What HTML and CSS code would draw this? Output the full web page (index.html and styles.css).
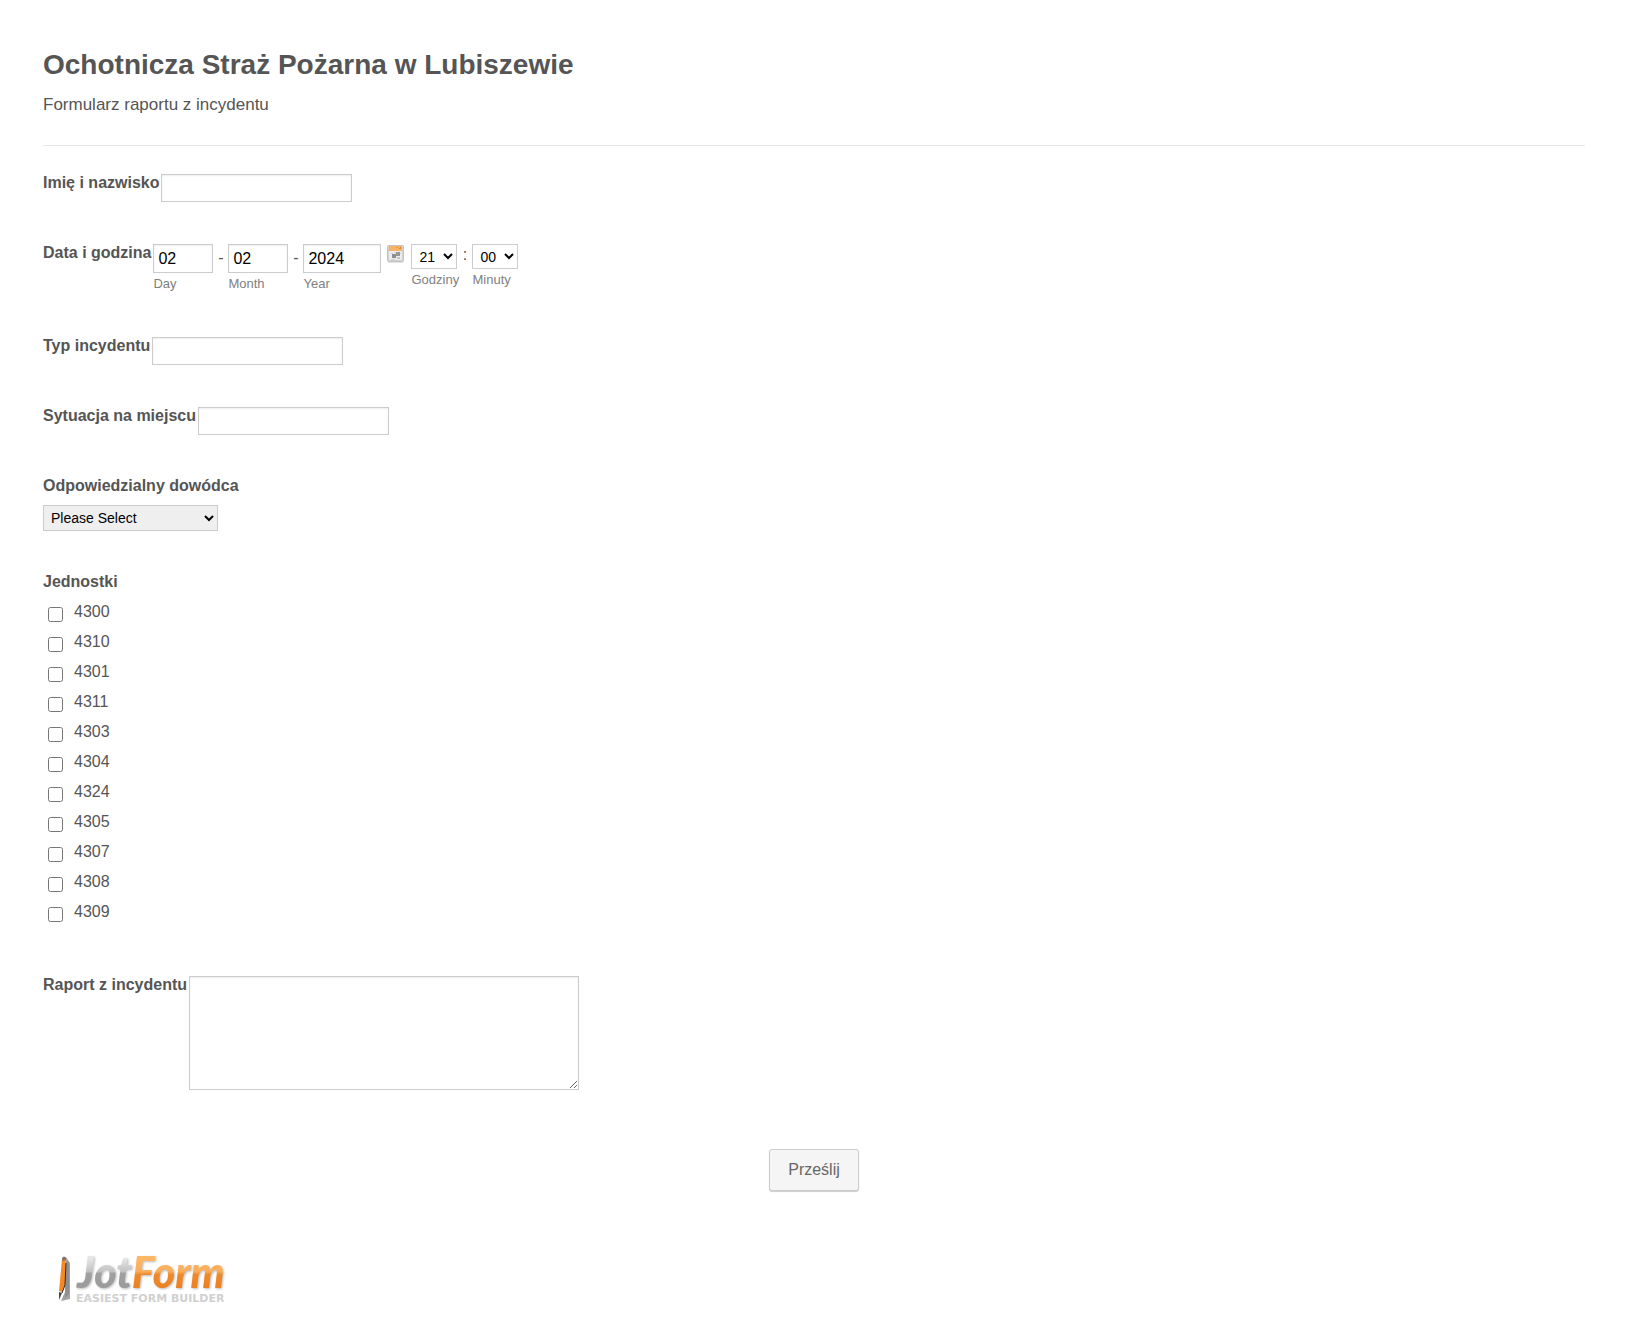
FILE: index.html
```html
<!DOCTYPE html>
<html lang="pl">
<head>
<meta charset="utf-8">
<title>Formularz raportu z incydentu</title>
<meta name="viewport" content="width=device-width, initial-scale=1">
<link rel="stylesheet" href="styles.css">
</head>
<body>
<form class="form">
  <header class="form-header">
    <h1 class="title">Ochotnicza Straż Pożarna w Lubiszewie</h1>
    <p class="subtitle">Formularz raportu z incydentu</p>
  </header>

  <div class="field">
    <label class="label" for="name">Imię i nazwisko</label>
    <input class="box" type="text" id="name">
  </div>

  <div class="field" role="group" aria-labelledby="date-label">
    <span class="label" id="date-label">Data i godzina</span>
    <div class="date">
      <div class="part"><input class="box box-date" type="text" id="day" value="02"><label class="sublabel" for="day">Day</label></div>
      <span class="sep">-</span>
      <div class="part"><input class="box box-date" type="text" id="month" value="02"><label class="sublabel" for="month">Month</label></div>
      <span class="sep">-</span>
      <div class="part"><input class="box box-date box-year" type="text" id="year" value="2024"><label class="sublabel" for="year">Year</label></div>
      <button class="calendar" type="button" aria-label="Kalendarz">
        <svg width="17" height="18" viewBox="0 0 17 18" aria-hidden="true">
          <rect x="0.5" y="0.5" width="16" height="16" rx="1" fill="#d2d2d2" stroke="#c2c2c2"/>
          <rect x="2" y="5" width="13" height="10" fill="#ececec"/>
          <rect x="2" y="1" width="13" height="5" fill="#f9b266"/>
          <path d="M9 2h2v1h2v-1h1v2h-2v-1h-2z" fill="#e98536"/>
          <path d="M4 8h2v1h-2zM7 7h2v1h-2zM12 8h2v1h-2zM4 14h4v1h-4z" fill="#d0d0d0"/>
          <rect x="9" y="7" width="4" height="4" fill="#969696"/>
          <rect x="5" y="9" width="4" height="4" fill="#8d8d8d"/>
          <rect x="10" y="12" width="3" height="2" fill="#c4c4c4"/>
          <path d="M1 17.500h15" stroke="#e4e4e4"/>
        </svg>
      </button>
      <div class="part"><select class="select select-time" id="hour"><option>21</option></select><label class="sublabel" for="hour">Godziny</label></div>
      <span class="sep sep-time">:</span>
      <div class="part"><select class="select select-time" id="minute"><option>00</option></select><label class="sublabel" for="minute">Minuty</label></div>
    </div>
  </div>

  <div class="field">
    <label class="label" for="type">Typ incydentu</label>
    <input class="box" type="text" id="type">
  </div>

  <div class="field">
    <label class="label" for="situation">Sytuacja na miejscu</label>
    <input class="box" type="text" id="situation">
  </div>

  <div class="field field-stacked">
    <label class="label" for="commander">Odpowiedzialny dowódca</label>
    <select class="select select-wide" id="commander"><option>Please Select</option></select>
  </div>

  <fieldset class="units">
    <legend class="label">Jednostki</legend>
    <label class="unit"><input class="check" type="checkbox"><span>4300</span></label>
    <label class="unit"><input class="check" type="checkbox"><span>4310</span></label>
    <label class="unit"><input class="check" type="checkbox"><span>4301</span></label>
    <label class="unit"><input class="check" type="checkbox"><span>4311</span></label>
    <label class="unit"><input class="check" type="checkbox"><span>4303</span></label>
    <label class="unit"><input class="check" type="checkbox"><span>4304</span></label>
    <label class="unit"><input class="check" type="checkbox"><span>4324</span></label>
    <label class="unit"><input class="check" type="checkbox"><span>4305</span></label>
    <label class="unit"><input class="check" type="checkbox"><span>4307</span></label>
    <label class="unit"><input class="check" type="checkbox"><span>4308</span></label>
    <label class="unit"><input class="check" type="checkbox"><span>4309</span></label>
  </fieldset>

  <div class="field">
    <label class="label" for="report">Raport z incydentu</label>
    <textarea class="box box-report" id="report"></textarea>
  </div>

  <div class="actions"><button class="submit" type="submit">Prześlij</button></div>
</form>

<footer class="footer">
  <a class="logo" href="#" aria-label="JotForm">
    <svg width="174" height="66" viewBox="0 -12 174 66" aria-hidden="true">
      <defs>
        <linearGradient id="silver" x1="0" y1="0" x2="0" y2="1">
          <stop offset="0.25" stop-color="#e6e6e6"/><stop offset="0.5" stop-color="#c2c2c2"/><stop offset="0.54" stop-color="#a0a0a0"/><stop offset="0.85" stop-color="#9a9a9a"/>
        </linearGradient>
        <linearGradient id="orange" x1="0" y1="0" x2="0" y2="1">
          <stop offset="0.2" stop-color="#fdb866"/><stop offset="0.5" stop-color="#fbad5b"/><stop offset="0.56" stop-color="#ee8a2c"/><stop offset="0.85" stop-color="#ea8122"/>
        </linearGradient>
      </defs>
      <path d="M9 2l4 6v36l-9 2 4-9z" fill="#a2a2a2"/>
      <path d="M10 5l2 4v30l-4 4z" fill="#8e8e8e"/>
      <path d="M5 4l4-2-1 28-3 7-3-1z" fill="#f58a24"/>
      <path d="M5 3q2-3 4 0v2l-4 1z" fill="#8b7460"/>
      <path d="M9 8l-1 22-3 8" fill="none" stroke="#222" stroke-width="1"/>
      <path d="M2 37l3 1-3 7z" fill="#444"/>
      <text class="wordmark" x="20" y="33"><tspan fill="url(#silver)">Jot</tspan><tspan fill="url(#orange)">Form</tspan></text>
      <text class="tagline" x="19" y="47">EASIEST FORM BUILDER</text>
    </svg>
  </a>
</footer>
</body>
</html>
```
FILE: styles.css
```css
* { box-sizing: border-box; }

body {
  margin: 0;
  padding: 45px 43px 34px;
  background: #fff;
  color: #555;
  font: 16px/18px "Liberation Sans", Arial, sans-serif;
}

.form-header {
  padding-bottom: 30px;
  margin-bottom: 28px;
  border-bottom: 1px solid #e6e6e6;
}

.title { margin: 0 0 9px; font-size: 28px; line-height: 40px; }
.subtitle { margin: 0; font-size: 17px; line-height: 21px; }

.field {
  display: flex;
  align-items: flex-start;
  gap: 2px;
  margin-bottom: 42px;
}
.field-stacked { flex-direction: column; gap: 10px; }

.label { padding: 0; font-weight: bold; }

.box {
  width: 191px;
  height: 28px;
  margin: 0;
  padding: 1px 4px;
  border: 1px solid #ccc;
  border-radius: 0;
  background: #fff;
  color: #000;
  box-shadow: inset 0 1px 2px #eee;
  font: 16px/18px "Liberation Sans", Arial, sans-serif;
}

.date { display: flex; align-items: flex-start; min-height: 51px; }
.part { display: flex; flex-direction: column; align-items: flex-start; }
.box-date { width: 60px; height: 29px; }
.box-year { width: 78px; }
.sep { width: 15px; padding-top: 5px; text-align: center; }
.sep-time { padding-top: 2px; }
.sublabel { margin-top: 3px; color: #808080; font-size: 13px; line-height: 15px; }
.part:has(.select-time) { width: 46px; white-space: nowrap; }

.calendar {
  display: flex;
  margin: 1px 7px 0 6px;
  padding: 0;
  border: 0;
  background: none;
}

.select {
  height: 26px;
  margin: 0;
  padding: 1px 3px;
  border: 1px solid #ccc;
  border-radius: 0;
  background-color: #fff;
  color: #000;
  font: 14px/18px "Liberation Sans", Arial, sans-serif;
}
.select-time { width: 46px; height: 25px; }
.select-wide { width: 175px; background-color: #efefef; }

.units { margin: 0 0 49px; padding: 0; border: 0; }
.units legend { margin-bottom: 6px; }
.unit { display: flex; align-items: center; gap: 11px; height: 30px; padding-left: 5px; }
.check { width: 15px; height: 15px; margin: 4px 0 0; }

.box-report { width: 390px; height: 114px; resize: both; }

.actions { display: flex; justify-content: center; padding-top: 17px; }
.submit {
  height: 42px;
  padding: 0 18px;
  border: 1px solid #ccc;
  border-radius: 3px;
  background: #f5f5f5;
  box-shadow: 0 1px 1px #ccc;
  color: #666;
  font: 16px/20px "Liberation Sans", Arial, sans-serif;
}

.footer { padding: 52px 0 0 14px; }
.logo { display: inline-flex; }
.wordmark {
  font: italic 900 43px Lato, sans-serif;
  filter: drop-shadow(1px 1px 1px #bbb);
}
.tagline { font: bold 11px "DejaVu Sans", sans-serif; fill: #d0d0d0; }
```
